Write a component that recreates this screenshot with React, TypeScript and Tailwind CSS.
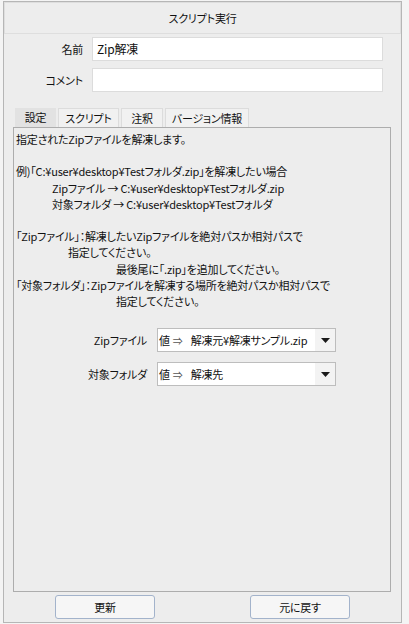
import { ReactNode } from "react";

const FONT = "font-['Meiryo_UI','Noto_Sans_CJK_JP',sans-serif] [font-feature-settings:'palt']";

const LINES: { text: string; indent: number }[] = [
  { text: "指定されたZipファイルを解凍します。", indent: 0 },
  { text: "", indent: 0 },
  { text: "例)「C:¥user¥desktop¥Testフォルダ.zip」を解凍したい場合", indent: 0 },
  { text: "Zipファイル → C:¥user¥desktop¥Testフォルダ.zip", indent: 36 },
  { text: "対象フォルダ → C:¥user¥desktop¥Testフォルダ", indent: 36 },
  { text: "", indent: 0 },
  { text: "「Zipファイル」：解凍したいZipファイルを絶対パスか相対パスで", indent: 0 },
  { text: "指定してください。", indent: 52 },
  { text: "最後尾に「.zip」を追加してください。", indent: 100 },
  { text: "「対象フォルダ」：Zipファイルを解凍する場所を絶対パスか相対パスで", indent: 0 },
  { text: "指定してください。", indent: 100 },
];

function Caret() {
  return (
    <svg width="9" height="5" viewBox="0 0 9 5">
      <path d="M0 0 H9 L4.5 5 Z" fill="#1a1a1a" />
    </svg>
  );
}

function Select({ value }: { value: string }) {
  return (
    <div className="flex h-[24px] w-[179px] border border-[#bdbdbd] bg-white">
      <div className="flex flex-1 items-center whitespace-nowrap pl-[1px] text-[#111]">
        <span>値</span>
        <span className="ml-[3px] text-[10px] text-[#555]">⇒</span>
        <span className="ml-[8px]">{value}</span>
      </div>
      <div className="flex w-[20px] items-center justify-center bg-[#f3f3f3]">
        <Caret />
      </div>
    </div>
  );
}

function Row({ label, children }: { label: string; children: ReactNode }) {
  return (
    <div className="flex items-center">
      <div className="w-[141px] pr-[10px] text-right text-[#111]">{label}</div>
      {children}
    </div>
  );
}

function Tab({ label, width, active }: { label: string; width: string; active?: boolean }) {
  return (
    <div
      className={
        active
          ? `flex h-[19px] items-center justify-center bg-[#e2e2e2] text-[#111] ${width}`
          : `flex h-[19px] items-center justify-center border border-b-0 border-[#dcdcdc] bg-[#f1f1f1] text-[#111] ${width}`
      }
    >
      {label}
    </div>
  );
}

export default function App() {
  return (
    <div className={`h-[624px] w-[409px] bg-[#f4f4f4] pl-[3px] pt-[1px] text-[11px] tracking-[-0.2px] ${FONT}`}>
      <div className="flex h-[622px] w-[399px] flex-col border border-[#b6b6b6] bg-[#ededed]">
        {/* タイトル */}
        <div className="flex h-[32px] items-center justify-center border border-[#dedede] text-[#111]">
          スクリプト実行
        </div>

        {/* 名前・コメント */}
        <div className="mt-[3px] flex flex-col gap-[7px] pr-[18px]">
          <div className="flex items-center">
            <div className="w-[79px] text-right text-[#111]">名前</div>
            <div className="ml-[9px] flex h-[24px] flex-1 items-center border border-[#dcdcdc] bg-white px-[4px] text-[12px] text-[#111]">
              Zip解凍
            </div>
          </div>
          <div className="flex items-center">
            <div className="w-[79px] text-right text-[#111]">コメント</div>
            <div className="ml-[9px] h-[24px] flex-1 border border-[#dcdcdc] bg-white" />
          </div>
        </div>

        {/* タブ */}
        <div className="mt-[16px] flex gap-[2px] pl-[11px]">
          <Tab label="設定" width="w-[41px]" active />
          <Tab label="スクリプト" width="w-[61px]" />
          <Tab label="注釈" width="w-[42px]" />
          <Tab label="バージョン情報" width="w-[84px]" />
        </div>

        <div className="ml-[9px] mr-[10px] h-[465px] border border-[#adadad] bg-[#ededed] pl-[2px] pt-[3px]">
          <div className="leading-[16.2px] text-[#111]">
            {LINES.map((l, i) => (
              <div key={i} className="h-[16.2px] whitespace-pre" style={{ paddingLeft: l.indent }}>
                {l.text}
              </div>
            ))}
          </div>

          <div className="mt-[19px] flex flex-col gap-[10px]">
            <Row label="Zipファイル">
              <Select value="解凍元¥解凍サンプル.zip" />
            </Row>
            <Row label="対象フォルダ">
              <Select value="解凍先" />
            </Row>
          </div>
        </div>

        {/* ボタン */}
        <div className="mt-[3px] flex gap-[95px] pl-[51px]">
          <button className="h-[24px] w-[100px] rounded-[3px] border border-[#a3b3cb] bg-[#f6f6f6] text-[#111]">
            更新
          </button>
          <button className="h-[24px] w-[100px] rounded-[3px] border border-[#a3b3cb] bg-[#f6f6f6] text-[#111]">
            元に戻す
          </button>
        </div>
      </div>
    </div>
  );
}
